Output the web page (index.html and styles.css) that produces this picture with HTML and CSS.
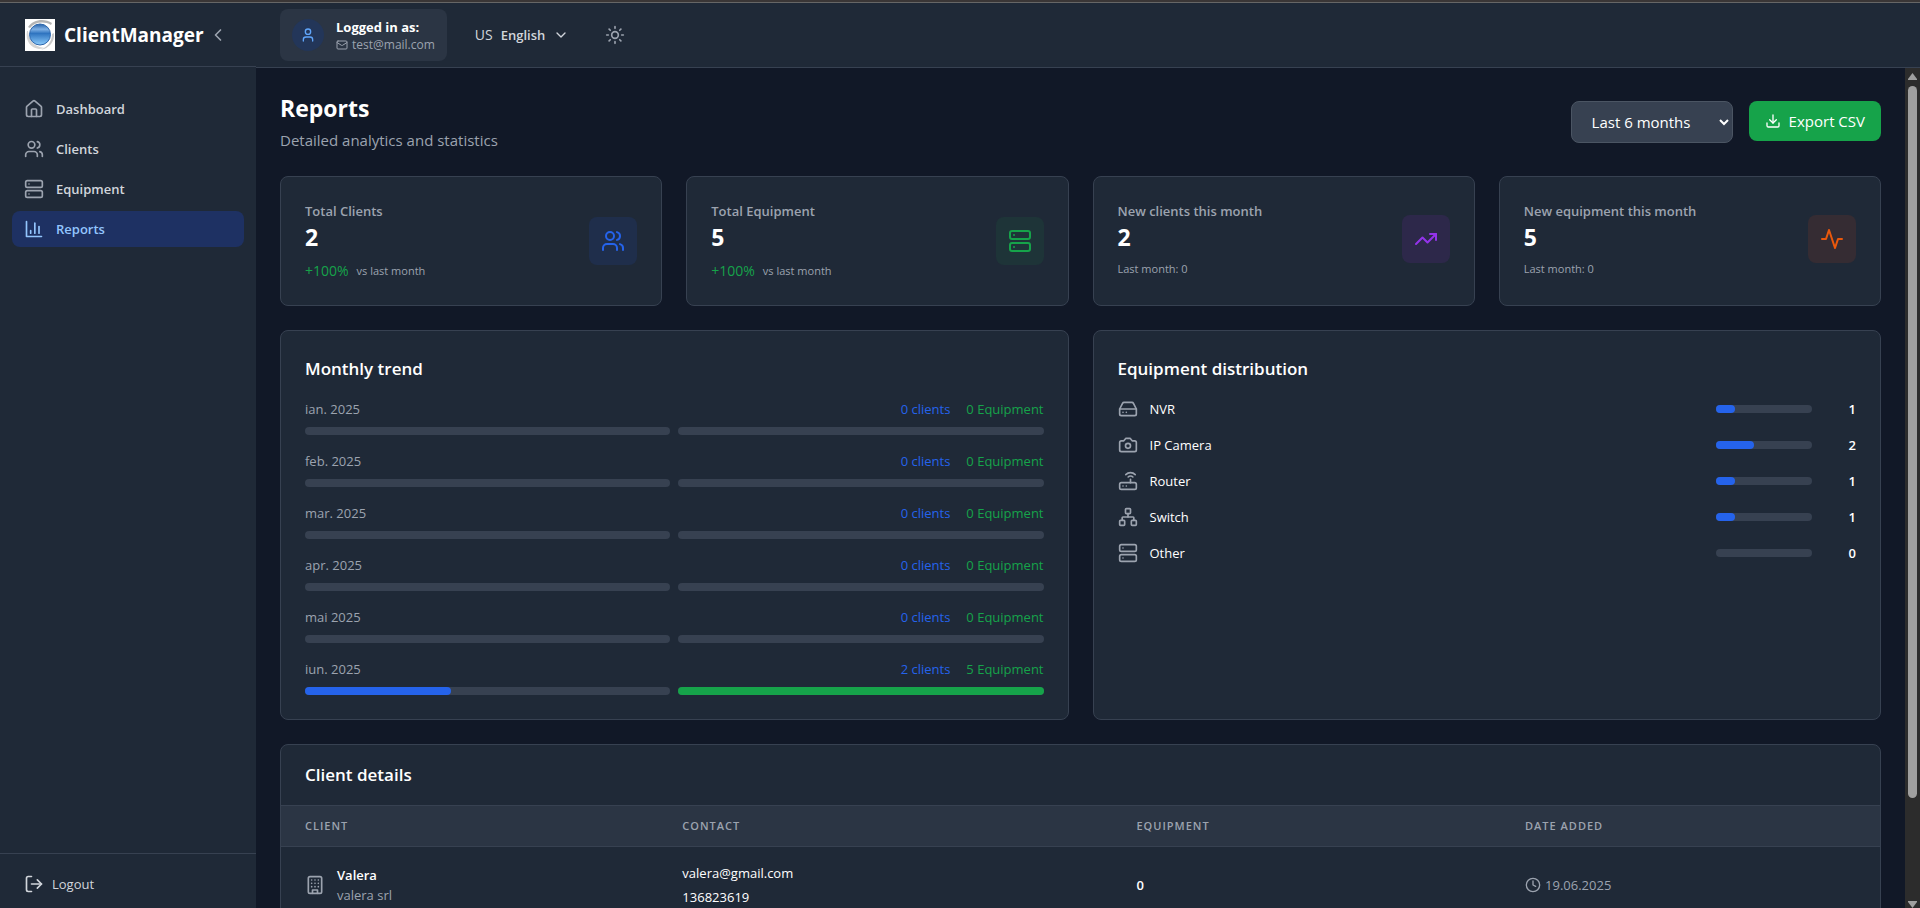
FILE: index.html
```
<!DOCTYPE html>
<html lang="en">
<head>
<meta charset="UTF-8">
<meta name="viewport" content="width=device-width, initial-scale=1.0">
<title>ClientManager - Reports</title>
<link rel="stylesheet" href="styles.css">
</head>
<body>

<!-- shared icons -->
<svg class="sprite" aria-hidden="true">
    <symbol id="home" viewBox="0 0 24 24"><path d="M15 21v-8a1 1 0 0 0-1-1h-4a1 1 0 0 0-1 1v8"/><path d="M3 10a2 2 0 0 1 .709-1.528l7-5.999a2 2 0 0 1 2.582 0l7 5.999A2 2 0 0 1 21 10v9a2 2 0 0 1-2 2H5a2 2 0 0 1-2-2z"/></symbol>
    <symbol id="users" viewBox="0 0 24 24"><path d="M16 21v-2a4 4 0 0 0-4-4H6a4 4 0 0 0-4 4v2"/><circle cx="9" cy="7" r="4"/><path d="M22 21v-2a4 4 0 0 0-3-3.870"/><path d="M16 3.130a4 4 0 0 1 0 7.750"/></symbol>
    <symbol id="server" viewBox="0 0 24 24"><rect width="20" height="8" x="2" y="2" rx="2"/><rect width="20" height="8" x="2" y="14" rx="2"/><path d="M6 6h.01M6 18h.01"/></symbol>
    <symbol id="chart" viewBox="0 0 24 24"><path d="M3 3v18h18"/><path d="M18 17V9"/><path d="M13 17V5"/><path d="M8 17v-3"/></symbol>
    <symbol id="logout" viewBox="0 0 24 24"><path d="M9 21H5a2 2 0 0 1-2-2V5a2 2 0 0 1 2-2h4"/><path d="m16 17 5-5-5-5"/><path d="M21 12H9"/></symbol>
</svg>

<div class="app">
    <aside class="sidebar">
        <div class="brand">
            <svg class="logo" viewBox="0 0 30 32" role="img" aria-label="ClientManager">
                <defs>
                    <linearGradient id="orb" x1="0" y1="0" x2="0" y2="1">
                        <stop offset="0" stop-color="#2460a8"/>
                        <stop offset="0.25" stop-color="#7fb0e4"/>
                        <stop offset="0.45" stop-color="#2f74c0"/>
                        <stop offset="1" stop-color="#8ccbfb"/>
                    </linearGradient>
                </defs>
                <rect width="30" height="32" fill="#fff"/>
                <path d="M3 8C8 0 20-1 27 4l-1 2C19 2 10 3 5 9z" fill="#b4b4b4"/>
                <path d="M2 12C0 22 6 29 14 30l8-1C12 29 4 24 3 12z" fill="#d4d4d4"/>
                <path d="M29 14c1 9-5 15-13 17 6-3 11-8 11-16z" fill="#c8c8c8"/>
                <circle cx="15" cy="15.500" r="10.500" fill="url(#orb)" stroke="#2c66ac"/>
            </svg>
            <span class="brand-name">ClientManager</span>
            <button class="collapse" aria-label="Collapse menu"><svg class="icon md" viewBox="0 0 24 24"><path d="m15 18-6-6 6-6"/></svg></button>
        </div>
        <nav class="menu">
            <a href="#dashboard"><svg class="icon md"><use href="#home"/></svg>Dashboard</a>
            <a href="#clients"><svg class="icon md"><use href="#users"/></svg>Clients</a>
            <a href="#equipment"><svg class="icon md"><use href="#server"/></svg>Equipment</a>
            <a href="#reports" class="active" aria-current="page"><svg class="icon md"><use href="#chart"/></svg>Reports</a>
        </nav>
        <div class="sidebar-footer">
            <button class="logout"><svg class="icon md"><use href="#logout"/></svg>Logout</button>
        </div>
    </aside>

    <div class="page">
        <header class="topbar">
            <div class="account">
                <div class="avatar"><svg class="icon sm" viewBox="0 0 24 24"><circle cx="12" cy="7" r="4"/><path d="M19 21v-2a4 4 0 0 0-4-4H9a4 4 0 0 0-4 4v2"/></svg></div>
                <div>
                    <div class="account-title">Logged in as:</div>
                    <div class="account-mail"><svg class="icon xs" viewBox="0 0 24 24"><rect width="20" height="16" x="2" y="4" rx="2"/><path d="m22 7-8.970 5.700a1.940 1.940 0 0 1-2.060 0L2 7"/></svg>test@mail.com</div>
                </div>
            </div>
            <button class="language"><span class="flag">US</span><strong>English</strong><svg class="icon sm" viewBox="0 0 24 24"><path d="m6 9 6 6 6-6"/></svg></button>
            <button class="theme" aria-label="Toggle theme"><svg class="icon md" viewBox="0 0 24 24"><circle cx="12" cy="12" r="4"/><path d="M12 2v2M12 20v2M4.930 4.930l1.410 1.410M17.660 17.660l1.410 1.410M2 12h2M20 12h2M6.340 17.660l-1.410 1.410M19.070 4.930l-1.410 1.410"/></svg></button>
        </header>

        <div class="scroll-area">
        <main class="content">
            <div class="heading">
                <div>
                    <h1>Reports</h1>
                    <p>Detailed analytics and statistics</p>
                </div>
                <div class="actions">
                    <select aria-label="Period">
                        <option>Last 3 months</option>
                        <option selected>Last 6 months</option>
                        <option>Last 12 months</option>
                    </select>
                    <button class="export"><svg class="icon sm" viewBox="0 0 24 24"><path d="M21 15v4a2 2 0 0 1-2 2H5a2 2 0 0 1-2-2v-4"/><path d="m7 10 5 5 5-5"/><path d="M12 15V3"/></svg>Export CSV</button>
                </div>
            </div>

            <section class="stats">
                <div class="card stat">
                    <div>
                        <div class="stat-label">Total Clients</div>
                        <div class="stat-value">2</div>
                        <div class="stat-change"><span class="up">+100%</span> vs last month</div>
                    </div>
                    <div class="badge blue"><svg class="icon lg"><use href="#users"/></svg></div>
                </div>
                <div class="card stat">
                    <div>
                        <div class="stat-label">Total Equipment</div>
                        <div class="stat-value">5</div>
                        <div class="stat-change"><span class="up">+100%</span> vs last month</div>
                    </div>
                    <div class="badge green"><svg class="icon lg"><use href="#server"/></svg></div>
                </div>
                <div class="card stat">
                    <div>
                        <div class="stat-label">New clients this month</div>
                        <div class="stat-value">2</div>
                        <div class="stat-last">Last month: 0</div>
                    </div>
                    <div class="badge purple"><svg class="icon lg" viewBox="0 0 24 24"><path d="m22 7-8.500 8.500-5-5L2 17"/><path d="M16 7h6v6"/></svg></div>
                </div>
                <div class="card stat">
                    <div>
                        <div class="stat-label">New equipment this month</div>
                        <div class="stat-value">5</div>
                        <div class="stat-last">Last month: 0</div>
                    </div>
                    <div class="badge orange"><svg class="icon lg" viewBox="0 0 24 24"><path d="M22 12h-4l-3 9L9 3l-3 9H2"/></svg></div>
                </div>
            </section>

            <section class="charts">
                <div class="card panel">
                    <h2>Monthly trend</h2>
                    <div class="months">
                        <div class="month">
                            <div class="month-row"><span>ian. 2025</span><span class="c-blue">0 clients</span><span class="c-green">0 Equipment</span></div>
                            <div class="bars"><div class="bar"></div><div class="bar"></div></div>
                        </div>
                        <div class="month">
                            <div class="month-row"><span>feb. 2025</span><span class="c-blue">0 clients</span><span class="c-green">0 Equipment</span></div>
                            <div class="bars"><div class="bar"></div><div class="bar"></div></div>
                        </div>
                        <div class="month">
                            <div class="month-row"><span>mar. 2025</span><span class="c-blue">0 clients</span><span class="c-green">0 Equipment</span></div>
                            <div class="bars"><div class="bar"></div><div class="bar"></div></div>
                        </div>
                        <div class="month">
                            <div class="month-row"><span>apr. 2025</span><span class="c-blue">0 clients</span><span class="c-green">0 Equipment</span></div>
                            <div class="bars"><div class="bar"></div><div class="bar"></div></div>
                        </div>
                        <div class="month">
                            <div class="month-row"><span>mai 2025</span><span class="c-blue">0 clients</span><span class="c-green">0 Equipment</span></div>
                            <div class="bars"><div class="bar"></div><div class="bar"></div></div>
                        </div>
                        <div class="month">
                            <div class="month-row"><span>iun. 2025</span><span class="c-blue">2 clients</span><span class="c-green">5 Equipment</span></div>
                            <div class="bars"><div class="bar"><div class="fill" style="width: 40%"></div></div><div class="bar"><div class="fill fill-green" style="width: 100%"></div></div></div>
                        </div>
                    </div>
                </div>

                <div class="card panel">
                    <h2>Equipment distribution</h2>
                    <ul class="types">
                        <li><svg class="icon md" viewBox="0 0 24 24"><path d="M22 12H2"/><path d="M5.450 5.110 2 12v6a2 2 0 0 0 2 2h16a2 2 0 0 0 2-2v-6l-3.450-6.890A2 2 0 0 0 16.760 4H7.240a2 2 0 0 0-1.790 1.110z"/><path d="M6 16h.01M10 16h.01"/></svg>
                            <span class="type-name">NVR</span><div class="bar"><div class="fill" style="width: 20%"></div></div><b>1</b></li>
                        <li><svg class="icon md" viewBox="0 0 24 24"><path d="M14.500 4h-5L7 7H4a2 2 0 0 0-2 2v9a2 2 0 0 0 2 2h16a2 2 0 0 0 2-2V9a2 2 0 0 0-2-2h-3z"/><circle cx="12" cy="13" r="3"/></svg>
                            <span class="type-name">IP Camera</span><div class="bar"><div class="fill" style="width: 40%"></div></div><b>2</b></li>
                        <li><svg class="icon md" viewBox="0 0 24 24"><rect width="20" height="8" x="2" y="14" rx="2"/><path d="M6.010 18H6M10.010 18H10M15 10v4"/><path d="M17.840 7.170a4 4 0 0 0-5.660 0"/><path d="M20.660 4.340a8 8 0 0 0-11.310 0"/></svg>
                            <span class="type-name">Router</span><div class="bar"><div class="fill" style="width: 20%"></div></div><b>1</b></li>
                        <li><svg class="icon md" viewBox="0 0 24 24"><rect x="16" y="16" width="6" height="6" rx="1"/><rect x="2" y="16" width="6" height="6" rx="1"/><rect x="9" y="2" width="6" height="6" rx="1"/><path d="M5 16v-3a1 1 0 0 1 1-1h12a1 1 0 0 1 1 1v3"/><path d="M12 12V8"/></svg>
                            <span class="type-name">Switch</span><div class="bar"><div class="fill" style="width: 20%"></div></div><b>1</b></li>
                        <li><svg class="icon md"><use href="#server"/></svg>
                            <span class="type-name">Other</span><div class="bar"></div><b>0</b></li>
                    </ul>
                </div>
            </section>

            <section class="card details">
                <h2>Client details</h2>
                <table>
                    <thead>
                        <tr><th class="col-client">Client</th><th class="col-contact">Contact</th><th class="col-equipment">Equipment</th><th>Date added</th></tr>
                    </thead>
                    <tbody>
                        <tr>
                            <td>
                                <div class="client">
                                    <svg class="icon md" viewBox="0 0 24 24"><rect width="16" height="20" x="4" y="2" rx="2"/><path d="M9 22v-4h6v4"/><path d="M8 6h.01M16 6h.01M12 6h.01M12 10h.01M12 14h.01M16 10h.01M16 14h.01M8 10h.01M8 14h.01"/></svg>
                                    <div>
                                        <div class="client-name">Valera</div>
                                        <div>valera srl</div>
                                    </div>
                                </div>
                            </td>
                            <td>
                                <div class="contact">valera@gmail.com</div>
                                <div class="contact">136823619</div>
                            </td>
                            <td><b>0</b></td>
                            <td><div class="date"><svg class="icon sm" viewBox="0 0 24 24"><circle cx="12" cy="12" r="10"/><path d="M12 6v6l4 2"/></svg>19.06.2025</div></td>
                        </tr>
                    </tbody>
                </table>
            </section>
        </main>
        <div class="scrollbar" aria-hidden="true">
            <svg class="arrow" viewBox="0 0 9 7"><path d="M4.500 0 9 6v1H0V6z"/></svg>
            <div class="track"><div class="thumb"></div></div>
            <svg class="arrow" viewBox="0 0 9 7"><path d="M4.500 7 0 1V0h9v1z"/></svg>
        </div>
        </div>
    </div>
</div>

</body>
</html>
```
FILE: styles.css
```
* {
    box-sizing: border-box;
}

body {
    display: flex;
    flex-direction: column;
    height: 100vh;
    margin: 0;
    overflow: hidden;
    border-top: 2px solid #3a3636;
    font-family: "Segoe UI", "Open Sans", sans-serif;
    font-size: 13px;
    line-height: 20px;
    color: #fff;
    background-color: #111827;
}

h1, h2, p, ul {
    margin: 0;
    padding: 0;
}

button, select {
    font: inherit;
    color: inherit;
    border: none;
    background: none;
    padding: 0;
    cursor: pointer;
}

.sprite {
    display: none;
}

.icon {
    flex: none;
    fill: none;
    stroke: currentColor;
    stroke-width: 2;
    stroke-linecap: round;
    stroke-linejoin: round;
}

.xs { width: 12px; height: 12px; }
.sm { width: 16px; height: 16px; }
.md { width: 20px; height: 20px; }
.lg { width: 24px; height: 24px; }

.app {
    display: flex;
    flex: 1;
    min-height: 0;
    border-top: 1px solid #666;
}

/* sidebar */
.sidebar {
    display: flex;
    flex-direction: column;
    flex: none;
    width: 256px;
    background-color: #1f2937;
}

.brand {
    display: flex;
    align-items: center;
    height: 64px;
    padding: 0 24px;
    border-bottom: 1px solid #374151;
}

.logo {
    flex: none;
    width: 32px;
    height: 32px;
}

.brand-name {
    margin-left: 8px;
    font-size: 19px;
    line-height: 28px;
    font-weight: 700;
}

.collapse {
    display: flex;
    margin-left: 4px;
    color: #9ca3af;
}

.menu {
    display: flex;
    flex-direction: column;
    flex: 1;
    gap: 4px;
    padding: 24px 12px;
}

.menu a {
    display: flex;
    align-items: center;
    gap: 12px;
    padding: 8px 12px;
    border-radius: 8px;
    font-weight: 600;
    color: #d1d5db;
    text-decoration: none;
}

.menu .icon {
    color: #9ca3af;
}

.menu .active, .menu .active .icon {
    color: #93c5fd;
}

.menu .active {
    background-color: #1e3163;
}

.sidebar-footer {
    padding: 12px 24px 6px;
    border-top: 1px solid #374151;
}

.logout {
    display: flex;
    align-items: center;
    gap: 8px;
    height: 36px;
    color: #d1d5db;
}

/* top bar */
.page {
    display: flex;
    flex-direction: column;
    flex: 1;
    min-width: 0;
}

.topbar {
    display: flex;
    align-items: center;
    flex: none;
    height: 65px;
    padding: 0 24px;
    background-color: #1f2937;
    border-bottom: 1px solid #374151;
}

.account {
    display: flex;
    align-items: center;
    gap: 12px;
    padding: 8px 12px;
    border-radius: 8px;
    background-color: #2b3544;
}

.avatar {
    display: flex;
    align-items: center;
    justify-content: center;
    width: 32px;
    height: 32px;
    border-radius: 50%;
    background-color: #233659;
    color: #60a5fa;
}

.account-title {
    font-weight: 700;
}

.account-mail {
    display: flex;
    align-items: center;
    gap: 4px;
    font-size: 12px;
    line-height: 16px;
    color: #9ca3af;
}

.language {
    display: flex;
    align-items: center;
    gap: 8px;
    margin-left: 28px;
    color: #d1d5db;
}

.flag {
    font-size: 14px;
}

.language strong {
    font-weight: 600;
}

.theme {
    display: flex;
    margin-left: 36px;
    color: #9ca3af;
}

/* content */
.scroll-area {
    display: flex;
    flex: 1;
    min-height: 0;
}

.content {
    display: flex;
    flex-direction: column;
    gap: 24px;
    flex: 1;
    min-width: 0;
    padding: 24px;
    overflow-y: auto;
    scrollbar-width: none;
}

.content > * {
    flex: none;
}

.scrollbar {
    display: flex;
    flex-direction: column;
    align-items: center;
    gap: 6px;
    flex: none;
    width: 15px;
    padding-top: 5px;
    background-color: #2c2c2c;
}

.arrow {
    flex: none;
    width: 9px;
    height: 7px;
    fill: #9f9f9f;
}

.track {
    flex: 1;
}

.thumb {
    width: 9px;
    height: 88%;
    border-radius: 5px;
    background-color: #9f9f9f;
}

.heading {
    display: flex;
    align-items: center;
    justify-content: space-between;
}

h1 {
    font-size: 23px;
    line-height: 32px;
    font-weight: 700;
}

.heading p {
    margin-top: 4px;
    font-size: 15px;
    line-height: 24px;
    color: #9ca3af;
}

.actions {
    display: flex;
    align-items: flex-start;
    gap: 16px;
    font-size: 15px;
}

.actions select {
    width: 162px;
    height: 42px;
    padding: 8px 16px;
    border: 1px solid #4b5563;
    border-radius: 8px;
    background-color: #374151;
}

.export {
    display: flex;
    align-items: center;
    gap: 8px;
    height: 40px;
    padding: 0 16px;
    border-radius: 8px;
    background-color: #16a34a;
}

.card {
    background-color: #1f2937;
    border: 1px solid #374151;
    border-radius: 8px;
}

.stats {
    display: grid;
    grid-template-columns: repeat(4, 1fr);
    gap: 24px;
}

.stat {
    display: flex;
    flex-wrap: wrap;
    align-items: center;
    align-content: flex-start;
    justify-content: space-between;
    padding: 24px;
}

.stat-label {
    font-weight: 600;
    color: #9ca3af;
}

.stat-value {
    font-size: 23px;
    line-height: 32px;
    font-weight: 700;
}

.stat-change, .stat-last {
    display: flex;
    align-items: center;
    gap: 8px;
    margin-top: 8px;
    font-size: 11px;
    line-height: 16px;
    color: #9ca3af;
}

.up {
    font-size: 14px;
    line-height: 20px;
    color: #16a34a;
}

.badge {
    display: flex;
    padding: 12px;
    border-radius: 8px;
}

.blue { background-color: #1f2e4b; color: #2563eb; }
.green { background-color: #1e3438; color: #16a34a; }
.purple { background-color: #2d284a; color: #9333ea; }
.orange { background-color: #352c33; color: #ea580c; }

.charts {
    display: grid;
    grid-template-columns: repeat(2, 1fr);
    gap: 24px;
}

.panel {
    padding: 24px;
}

h2 {
    font-size: 17px;
    line-height: 28px;
    font-weight: 600;
}

.months {
    display: flex;
    flex-direction: column;
    gap: 16px;
    margin-top: 16px;
}

.month-row {
    display: flex;
    gap: 16px;
    color: #9ca3af;
}

.month-row span:first-child {
    flex: 1;
}

.month-row .c-blue { color: #2563eb; }
.month-row .c-green { color: #16a34a; }

.bars {
    display: grid;
    grid-template-columns: repeat(2, 1fr);
    gap: 8px;
    margin-top: 8px;
}

.bar {
    height: 8px;
    border-radius: 4px;
    background-color: #374151;
}

.fill {
    height: 8px;
    border-radius: 4px;
    background-color: #2563eb;
}

.fill-green {
    background-color: #16a34a;
}

.types {
    display: flex;
    flex-direction: column;
    gap: 16px;
    margin-top: 16px;
    list-style: none;
}

.types li {
    display: flex;
    align-items: center;
    gap: 12px;
}

.types .icon {
    color: #9ca3af;
}

.type-name {
    flex: 1;
}

.types .bar {
    width: 96px;
}

.types b {
    width: 32px;
    font-weight: 600;
    text-align: right;
}

/* client table */
.details {
    overflow: hidden;
}

.details h2 {
    padding: 16px 24px;
    border-bottom: 1px solid #374151;
}

table {
    width: 100%;
    border-collapse: collapse;
}

th {
    padding: 12px 24px;
    font-size: 11px;
    line-height: 16px;
    font-weight: 600;
    letter-spacing: 1px;
    text-align: left;
    text-transform: uppercase;
    color: #9ca3af;
    background-color: #2b3544;
}

thead tr {
    border-bottom: 1px solid #374151;
}

td {
    padding: 16px 24px;
}

td b {
    font-weight: 600;
}

.col-client { width: 23.6%; }
.col-contact { width: 28.4%; }
.col-equipment { width: 24.3%; }

.client, .date {
    display: flex;
    align-items: center;
    color: #9ca3af;
}

.client {
    gap: 12px;
}

.client-name {
    font-weight: 600;
    color: #fff;
}

.date {
    gap: 4px;
}

.contact + .contact {
    margin-top: 4px;
}
```
